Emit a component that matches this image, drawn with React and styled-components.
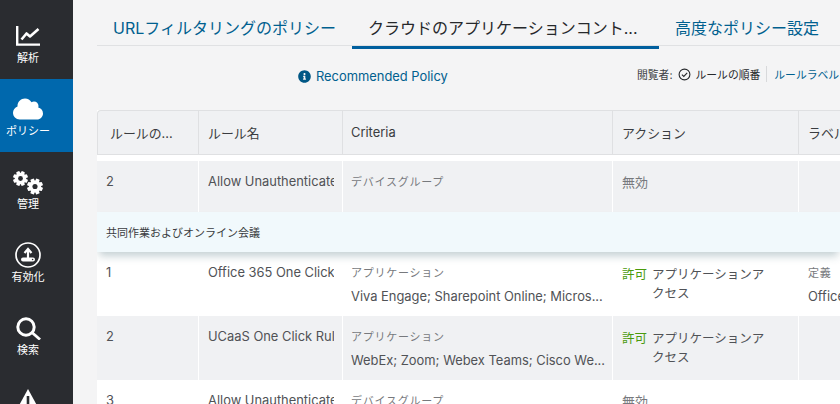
import React from 'react';
import styled, { createGlobalStyle } from 'styled-components';
import { FaCloud, FaInfoCircle } from 'react-icons/fa';

const GlobalStyle = createGlobalStyle`
  html, body {
    margin: 0;
    padding: 0;
    height: 100%;
    overflow: hidden;
    background: #f4f4f5;
    font-family: Inter, 'Noto Sans CJK JP', sans-serif;
  }
`;

const Page = styled.div`
  display: flex;
  width: 840px;
  height: 404px;
  overflow: hidden;
`;

const Sidebar = styled.nav`
  flex: 0 0 73px;
  height: 404px;
  overflow: hidden;
  background: #2a2c30;
  padding-top: 6px;
  box-sizing: border-box;
`;

const NavItem = styled.div`
  height: 73px;
  display: flex;
  flex-direction: column;
  align-items: center;
  padding: 15px 17px 0 0;
  box-sizing: border-box;
  color: #fff;
  font-size: 11px;
  background: ${(p) => (p.$active ? '#0068ad' : 'transparent')};
`;

const NavIcon = styled.div`
  height: 30px;
  display: flex;
  align-items: center;
  justify-content: center;
`;

const NavLabel = styled.span`
  min-height: 14px;
  line-height: 14px;
  white-space: nowrap;
`;

const Main = styled.main`
  flex: 1;
  min-width: 0;
  padding-left: 24px;
  overflow: hidden;
`;

const Tabs = styled.div`
  display: flex;
  height: 46px;
  border-bottom: 1px solid #e0e1e3;
  box-sizing: border-box;
  width: 800px;
`;

const Tab = styled.div`
  flex: 0 0 ${(p) => p.$width}px;
  box-sizing: border-box;
  height: 49px;
  padding: 17px 0 0 ${(p) => p.$pad}px;
  font-size: 16px;
  line-height: 22px;
  white-space: nowrap;
  color: ${(p) => (p.$active ? '#26282b' : '#00608f')};
  border-bottom: ${(p) => (p.$active ? '3px solid #005f9e' : 'none')};
`;

const InfoBar = styled.div`
  display: flex;
  align-items: center;
  height: 64px;
  width: 800px;
  padding-bottom: 4px;
  box-sizing: border-box;
`;

const Recommended = styled.div`
  display: flex;
  align-items: center;
  gap: 5px;
  margin-left: 201px;
  width: 339px;
  font-size: 12.9px;
  color: #00608f;
  svg { color: #005785; }
`;

const ViewBy = styled.div`
  display: flex;
  align-items: center;
  font-size: 10.8px;
  white-space: nowrap;
  color: #3c3e42;
  margin-bottom: 4px;
`;

const ViewOption = styled.span`
  display: inline-flex;
  align-items: center;
  gap: 5px;
  margin-left: 5px;
  color: #26282b;
`;

const ViewLink = styled.span`
  margin-left: 6px;
  padding-left: 7px;
  border-left: 1px solid #d8d9db;
  color: #00608f;
`;

const Table = styled.div`
  width: 743px;
  overflow: hidden;
  background: #fff;
`;

const Row = styled.div`
  display: grid;
  grid-template-columns: 101px 144px 270px 186px 100px;
  height: ${(p) => p.$height}px;
  background: ${(p) => (p.$shaded ? '#f0f1f3' : '#fff')};
`;

const HeaderRow = styled(Row)`
  grid-template-columns: 100px 144px 270px 186px 100px;
  border-top: 1px solid #dfe0e2;
  border-bottom: 1px solid #dfe0e2;
  border-left: 1px solid #dfe0e2;
  box-sizing: border-box;
  margin-bottom: 6px;
  border-top-left-radius: 4px;
`;

const HeaderCell = styled.div`
  font-size: 12.9px;
  line-height: 18px;
  padding: ${(p) => (p.$latin ? '13px' : '14px')} 0 0 ${(p) => p.$pad || 9}px;
  color: #3a3c40;
  white-space: nowrap;
  overflow: hidden;
  & + & { border-left: 1px solid #dfe0e2; }
`;

const Cell = styled.div`
  padding: 13px 0 0 ${(p) => p.$pad || 9}px;
  font-size: 12.9px;
  line-height: 15px;
  color: #505256;
  overflow: hidden;
  white-space: nowrap;
  box-sizing: border-box;
  & + & { border-left: 1px solid #fff; }
`;

const RuleName = styled.div`
  width: 126px;
  overflow: hidden;
`;

const GroupRow = styled.div`
  position: relative;
  z-index: 1;
  height: 40px;
  padding: 14px 0 0 9px;
  box-sizing: border-box;
  font-size: 11px;
  line-height: 15px;
  color: #3a3c40;
  background: #f1f9fc;
  box-shadow: 0 6px 8px -2px rgba(60, 100, 110, 0.3);
`;

const FieldLabel = styled.div`
  margin-top: 1px;
  font-size: 11px;
  line-height: 15px;
  color: #77797d;
  letter-spacing: 0.75px;
`;

const FieldValue = styled.div`
  margin-top: 7px;
  font-size: 12.9px;
  line-height: 18px;
  color: #505256;
  overflow: hidden;
  white-space: nowrap;
`;

const ActionWrap = styled.div`
  display: flex;
  gap: 5px;
  font-size: 12.5px;
  line-height: 19px;
  white-space: normal;
  width: 150px;
`;

const Allow = styled.span`
  color: #4a9a0c;
  flex: none;
`;

const Muted = styled.div`
  padding-top: 1px;
  color: #77797d;
  font-size: 13px;
`;

const TrendIcon = () => (
  <svg width="24" height="20" viewBox="0 0 24 20" fill="none" stroke="#fff">
    <path d="M1.2 0v18.6H24" strokeWidth="2.4" />
    <path d="M5.5 13.5l5-6 3.5 3L22.5 3" strokeWidth="2.6" strokeLinejoin="round" />
  </svg>
);

// one gear: eight teeth round a ring, the hole shows the sidebar colour
const Gear = ({ cx, cy, r }) => (
  <g transform={`translate(${cx} ${cy})`}>
    {[0, 45, 90, 135].map((deg) => (
      <rect
        key={deg}
        x={-r * 0.24}
        y={-r}
        width={r * 0.48}
        height={r * 2}
        rx="0.8"
        fill="#fff"
        transform={`rotate(${deg + 22.5})`}
      />
    ))}
    <circle r={r * 0.76} fill="#fff" />
    <circle r={r * 0.32} fill="#2a2c30" />
  </g>
);

const GearsIcon = () => (
  <svg width="30" height="25" viewBox="0 0 30 25">
    <Gear cx={7.5} cy={8.5} r={7.5} />
    <Gear cx={22} cy={16.5} r={8} />
  </svg>
);

const PublishIcon = () => (
  <svg width="26" height="26" viewBox="0 0 26 26" fill="none">
    <circle cx="13" cy="13" r="12" stroke="#fff" strokeWidth="1.7" />
    <path d="M13 16V7.5M9.5 11L13 7l3.5 4" stroke="#fff" strokeWidth="2.2" />
    <rect x="6" y="15.5" width="14" height="4" rx="2" fill="#fff" />
    <circle cx="17.6" cy="17.5" r="0.8" fill="#2a2c30" />
  </svg>
);

const SearchIcon = () => (
  <svg width="25" height="23" viewBox="0 0 25 23" fill="none" stroke="#fff">
    <circle cx="10" cy="10" r="8.2" strokeWidth="3" />
    <path d="M16 15.5l8 7" strokeWidth="2.8" />
  </svg>
);

const WarningIcon = () => (
  <svg width="24" height="24" viewBox="0 0 24 24">
    <path d="M12 0L24 22H0z" fill="#fff" />
    <path d="M12 7v8" stroke="#2a2c30" strokeWidth="2.6" />
    <circle cx="12" cy="18.5" r="1.5" fill="#2a2c30" />
  </svg>
);

const CheckIcon = () => (
  <svg width="13" height="13" viewBox="0 0 13 13" fill="none" stroke="#26282b" strokeWidth="1.1">
    <circle cx="6.5" cy="6.5" r="5.4" />
    <path d="M3.9 6.6l1.9 1.9 3.4-3.6" />
  </svg>
);

const navItems = [
  { id: 'analytics', label: '解析', icon: <TrendIcon /> },
  { id: 'policy', label: 'ポリシー', icon: <FaCloud size={30} color="#fff" />, active: true },
  { id: 'admin', label: '管理', icon: <GearsIcon /> },
  { id: 'activate', label: '有効化', icon: <PublishIcon /> },
  { id: 'search', label: '検索', icon: <SearchIcon /> },
  { id: 'alerts', label: '', icon: <WarningIcon /> },
];

const App = () => {
  return (
    <>
      <GlobalStyle />
      <Page>
        <Sidebar>
          {navItems.map((item) => (
            <NavItem key={item.id} $active={item.active}>
              <NavIcon>{item.icon}</NavIcon>
              <NavLabel>{item.label}</NavLabel>
            </NavItem>
          ))}
        </Sidebar>
        <Main>
          <Tabs>
            <Tab $width={255} $pad={16}>URLフィルタリングのポリシー</Tab>
            <Tab $width={307} $pad={16} $active>クラウドのアプリケーションコント...</Tab>
            <Tab $width={200} $pad={16}>高度なポリシー設定</Tab>
          </Tabs>
          <InfoBar>
            <Recommended>
              <FaInfoCircle size={13} />
              Recommended Policy
            </Recommended>
            <ViewBy>
              閲覧者:
              <ViewOption>
                <CheckIcon />
                ルールの順番
              </ViewOption>
              <ViewLink>ルールラベル</ViewLink>
            </ViewBy>
          </InfoBar>
          <Table>
            <HeaderRow $height={45} $shaded>
              <HeaderCell $pad={12}>ルールの...</HeaderCell>
              <HeaderCell>ルール名</HeaderCell>
              <HeaderCell $latin $pad={8}>Criteria</HeaderCell>
              <HeaderCell>アクション</HeaderCell>
              <HeaderCell>ラベル</HeaderCell>
            </HeaderRow>
            <Row $height={51} $shaded>
              <Cell>2</Cell>
              <Cell><RuleName>Allow Unauthenticated</RuleName></Cell>
              <Cell $pad={8}><FieldLabel>デバイスグループ</FieldLabel></Cell>
              <Cell><Muted>無効</Muted></Cell>
              <Cell />
            </Row>
            <GroupRow>共同作業およびオンライン会議</GroupRow>
            <Row $height={64}>
              <Cell>1</Cell>
              <Cell><RuleName>Office 365 One Click Rule</RuleName></Cell>
              <Cell $pad={8}>
                <FieldLabel>アプリケーション</FieldLabel>
                <FieldValue>Viva Engage; Sharepoint Online; Micros...</FieldValue>
              </Cell>
              <Cell>
                <ActionWrap><Allow>許可</Allow><span>アプリケーションアクセス</span></ActionWrap>
              </Cell>
              <Cell>
                <FieldLabel>定義</FieldLabel>
                <FieldValue>Office 365</FieldValue>
              </Cell>
            </Row>
            <Row $height={64} $shaded>
              <Cell>2</Cell>
              <Cell><RuleName>UCaaS One Click Rule</RuleName></Cell>
              <Cell $pad={8}>
                <FieldLabel>アプリケーション</FieldLabel>
                <FieldValue>WebEx; Zoom; Webex Teams; Cisco We...</FieldValue>
              </Cell>
              <Cell>
                <ActionWrap><Allow>許可</Allow><span>アプリケーションアクセス</span></ActionWrap>
              </Cell>
              <Cell />
            </Row>
            <Row $height={64}>
              <Cell>3</Cell>
              <Cell><RuleName>Allow Unauthenticated</RuleName></Cell>
              <Cell $pad={8}><FieldLabel>デバイスグループ</FieldLabel></Cell>
              <Cell><Muted>無効</Muted></Cell>
              <Cell />
            </Row>
          </Table>
        </Main>
      </Page>
    </>
  );
};

export default App;
